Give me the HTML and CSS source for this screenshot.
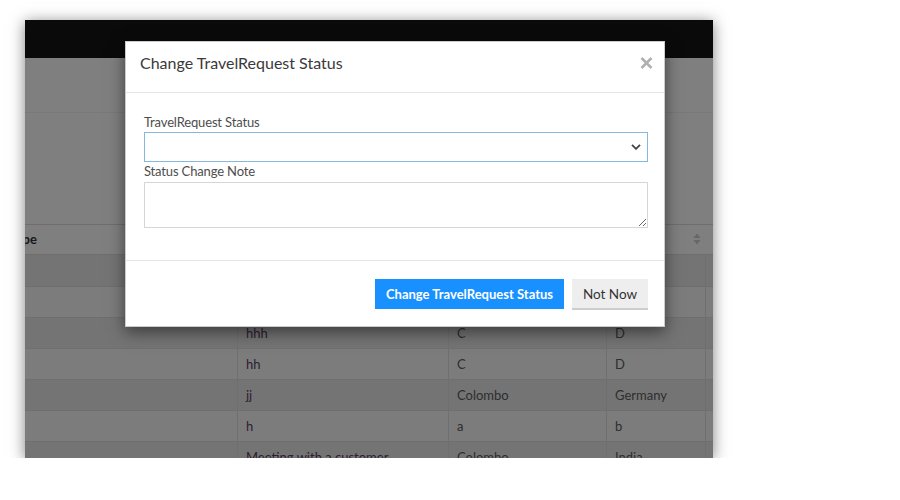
FILE: index.html
```html
<!DOCTYPE html>
<html lang="en">
<head>
<meta charset="utf-8">
<title>Change TravelRequest Status</title>
<link rel="stylesheet" href="styles.css">
</head>
<body>
<div class="stage">
  <div class="window">
    <div class="topbar"></div>
    <div class="page">
      <div class="toolbar"></div>
      <div class="filters"></div>
      <div class="table-scroll">
        <table class="grid">
          <colgroup>
            <col class="c1"><col class="c2"><col class="c3"><col class="c4"><col class="c5">
          </colgroup>
          <thead>
            <tr>
              <th>Type</th>
              <th>Purpose</th>
              <th>From</th>
              <th class="sortable"><span>To</span>
                <svg class="sort" width="8" height="12" viewBox="0 0 8 12"><path d="M4 0.5 L7.5 5 L0.5 5 Z M4 11.5 L7.5 7 L0.5 7 Z" fill="#cfcfcf"/></svg>
              </th>
              <th>Status</th>
            </tr>
          </thead>
          <tbody>
            <tr class="odd first"><td></td><td class="link">Business trip</td><td>Colombo</td><td>Japan</td><td></td></tr>
            <tr><td></td><td class="link">Conference</td><td>Kandy</td><td>India</td><td></td></tr>
            <tr class="odd"><td></td><td class="link">hhh</td><td>C</td><td>D</td><td></td></tr>
            <tr><td></td><td class="link">hh</td><td>C</td><td>D</td><td></td></tr>
            <tr class="odd"><td></td><td class="link">jj</td><td>Colombo</td><td>Germany</td><td></td></tr>
            <tr><td></td><td class="link">h</td><td>a</td><td>b</td><td></td></tr>
            <tr class="odd"><td></td><td class="link">Meeting with a customer</td><td>Colombo</td><td>India</td><td></td></tr>
          </tbody>
        </table>
      </div>
    </div>

    <div class="overlay">
      <div class="modal">
        <div class="modal-header">
          <h4 class="modal-title">Change TravelRequest Status</h4>
          <button class="close" type="button" aria-label="Close">
            <svg width="13" height="12" viewBox="0 0 13 12"><path d="M1.5 1 L11.5 11 M11.5 1 L1.5 11" stroke="#b0b0b0" stroke-width="2.6" stroke-linecap="butt"/></svg>
          </button>
        </div>
        <div class="modal-body">
          <label class="field-label">TravelRequest Status</label>
          <div class="select">
            <svg width="10" height="6" viewBox="0 0 10 6"><path d="M1 0.8 L5 4.8 L9 0.8" fill="none" stroke="#444" stroke-width="1.8"/></svg>
          </div>
          <label class="field-label">Status Change Note</label>
          <textarea class="note"></textarea>
        </div>
        <div class="modal-footer">
          <button class="btn btn-primary" type="button">Change TravelRequest Status</button>
          <button class="btn btn-default" type="button">Not Now</button>
        </div>
      </div>
    </div>
  </div>
</div>
</body>
</html>
```

FILE: styles.css
```css
* { box-sizing: border-box; }

body {
  margin: 0;
  background: #ffffff;
  font-family: Lato, "Open Sans", sans-serif;
  color: #333;
}

.stage {
  padding: 20px 0 0 25px;
}

.window {
  position: relative;
  width: 688px;
  height: 438px;
  overflow: hidden;
  background: #ffffff;
  box-shadow: 0 2px 14px rgba(0, 0, 0, 0.5);
}

.topbar {
  height: 38px;
  background: #141414;
}

.toolbar {
  height: 55px;
  border-bottom: 1px solid #f1f1f1;
}

.filters {
  height: 111px;
}

.table-scroll {
  overflow: hidden;
}

.grid {
  table-layout: fixed;
  border-collapse: separate;
  border-spacing: 0;
  width: 904px;
  margin-left: -24px;
  font-size: 13px;
  line-height: 18px;
}

.c1 { width: 236px; }
.c2 { width: 211px; }
.c3 { width: 158px; }
.c4 { width: 99px; }
.c5 { width: 200px; }

.grid th {
  text-align: left;
  font-weight: 700;
  color: #333;
  padding: 5px 8px 6px;
  border-top: 1px solid #dcdcdc;
  border-bottom: 1px solid #dcdcdc;
  white-space: nowrap;
  overflow: hidden;
}

.grid th.sortable {
  padding-right: 4px;
}

.grid th.sortable span {
  float: left;
}

.sort {
  float: right;
  margin-top: 3px;
}

.grid td {
  padding: 6px 8px;
  border-bottom: 1px solid #dedede;
  border-left: 1px solid #dedede;
  color: #5c5c5c;
  white-space: nowrap;
  overflow: hidden;
}

.grid td:first-child {
  border-left: none;
}

.grid tr.first td {
  padding-top: 7px;
}

.grid td.link {
  color: #5a3f66;
}

.grid tr.odd td {
  background: #e9e9e9;
}

.grid tbody tr:not(.odd) td {
  background: #f9f9f9;
}

/* overlay + modal */
.overlay {
  position: absolute;
  inset: 0;
  background: rgba(0, 0, 0, 0.5);
  padding: 21px 0 0 100px;
}

.modal {
  width: 540px;
  background: #ffffff;
  border: 1px solid rgba(0, 0, 0, 0.2);
  box-shadow: 0 5px 15px rgba(0, 0, 0, 0.5);
}

.modal-header {
  display: flex;
  justify-content: space-between;
  align-items: flex-start;
  height: 51px;
  padding: 11px 11px 0 14px;
  border-bottom: 1px solid #e5e5e5;
}

.modal-title {
  margin: 0;
  font-family: Lato, "Open Sans", sans-serif;
  font-weight: 400;
  font-size: 16px;
  line-height: 20px;
  color: #3a3a3a;
}

.close {
  margin: 4px 0 0;
  padding: 0;
  border: 0;
  background: transparent;
  display: flex;
}

.modal-body {
  display: flex;
  flex-direction: column;
  padding: 20px 16px 32px 18px;
}

.field-label {
  display: block;
  font-size: 13px;
  line-height: 18px;
  color: #4d4d4d;
  letter-spacing: -0.15px;
}

.select {
  display: flex;
  align-items: center;
  justify-content: flex-end;
  height: 30px;
  margin: 1px 0 0;
  padding-right: 6px;
  border: 1px solid #84b8de;
  background: #ffffff;
}

.note {
  display: block;
  height: 46px;
  margin: 2px 0 0;
  border: 1px solid #d6d6d6;
  resize: vertical;
  font-family: inherit;
  font-size: 13px;
  padding: 4px 8px;
}

.modal-footer {
  display: flex;
  justify-content: flex-end;
  gap: 8px;
  padding: 18px 16px 16px;
  border-top: 1px solid #e5e5e5;
}

.btn {
  height: 30px;
  border: 0;
  font-family: Lato, "Open Sans", sans-serif;
  font-size: 13px;
  line-height: 18px;
  padding: 0 10px;
  white-space: nowrap;
  cursor: pointer;
}

.btn-primary {
  min-width: 189px;
  background: #1890ff;
  color: #ffffff;
  font-weight: 700;
}

.btn-default {
  min-width: 76px;
  height: 31px;
  background: #eeeeee;
  color: #333;
  border-bottom: 2px solid #cdcdcd;
  font-size: 13.5px;
}
```
